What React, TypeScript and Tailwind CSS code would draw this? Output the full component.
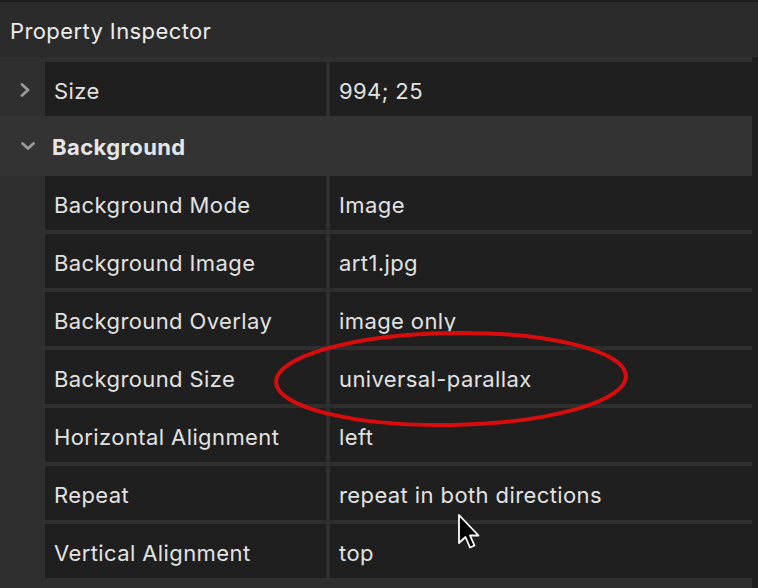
import React from 'react';

const rows = [
  { label: 'Background Mode', value: 'Image' },
  { label: 'Background Image', value: 'art1.jpg' },
  { label: 'Background Overlay', value: 'image only' },
  { label: 'Background Size', value: 'universal-parallax' },
  { label: 'Horizontal Alignment', value: 'left' },
  { label: 'Repeat', value: 'repeat in both directions' },
  { label: 'Vertical Alignment', value: 'top' },
];

function Row({ label, value, chevron }: { label: string; value: string; chevron?: boolean }) {
  return (
    <div className="flex h-[54px]">
      <div className="w-[45px] shrink-0 flex items-center justify-center">
        {chevron && (
          <svg width="12" height="16" viewBox="0 0 12 16" className="ml-[5px] mt-[2px]">
            <path d="M3 2.5 L9 8 L3 13.5" fill="none" stroke="#9a9a9a" strokeWidth="2.8" strokeLinecap="round" strokeLinejoin="round" />
          </svg>
        )}
      </div>
      <div className="w-[281px] shrink-0 bg-[#1f1f1f] flex items-center pl-[9px] pt-[5px] text-[22px] text-[#e2e2e2]">{label}</div>
      <div className="ml-[4px] flex-1 bg-[#1f1f1f] flex items-center pl-[9px] pt-[5px] text-[22px] text-[#e2e2e2]">{value}</div>
    </div>
  );
}

export default function App() {
  return (
    <div className="relative w-[758px] h-[588px] overflow-hidden bg-[#1e1e1e] pt-[2px] font-['Inter',sans-serif] tracking-[0.4px]">
      <div className="h-[55px] bg-[#2b2b2b] flex items-center pl-[10px] pt-[4px] text-[22px] text-[#ececec]">Property Inspector</div>
      <div className="flex h-[531px]">
        <div className="flex-1 bg-[#2f2f2f] pt-[5px]">
          <Row label="Size" value="994; 25" chevron />
          <div className="h-[60px] bg-[#333333] flex items-center">
            <div className="w-[45px] flex items-center justify-center">
              <svg width="16" height="12" viewBox="0 0 16 12" className="ml-[10px]">
                <path d="M2.5 3.5 L8 8.5 L13.5 3.5" fill="none" stroke="#9a9a9a" strokeWidth="2.8" strokeLinecap="round" strokeLinejoin="round" />
              </svg>
            </div>
            <span className="ml-[7px] pt-[3px] text-[22px] font-bold text-[#e6e6e6]">Background</span>
          </div>
          <div className="flex flex-col gap-[4px]">
            {rows.map(r => (
              <Row key={r.label} label={r.label} value={r.value} />
            ))}
          </div>
        </div>
        <div className="w-[6px] bg-[#1e1e1e]" />
      </div>

      {/* annotation ellipse */}
      <svg className="absolute left-0 top-0 pointer-events-none" width="758" height="588">
        <ellipse cx="451" cy="379" rx="175" ry="46" fill="none" stroke="#d80c0c" strokeWidth="4" transform="rotate(-1 451 379)" />
      </svg>

      {/* mouse cursor */}
      <svg className="absolute left-[457px] top-[513px]" width="28" height="40" viewBox="0 0 28 40">
        <path d="M2 2 L2 30 L8.5 24 L13 34.5 L17.5 32.5 L13 22.5 L21.5 22.5 Z" fill="#000" stroke="#fff" strokeWidth="1.8" strokeLinejoin="round" />
      </svg>
    </div>
  );
}
